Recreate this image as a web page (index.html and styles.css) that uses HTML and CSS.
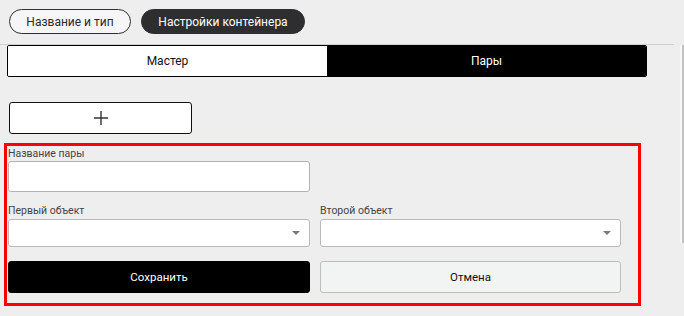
FILE: index.html
```html
<!DOCTYPE html>
<html lang="ru">
<head>
<meta charset="utf-8">
<title>Настройки контейнера</title>
<link rel="stylesheet" href="styles.css">
</head>
<body>
<div class="page">
  <div class="tabs">
    <button class="pill">Название и тип</button>
    <button class="pill pill-active">Настройки контейнера</button>
  </div>
  <div class="segmented">
    <div class="seg seg-light">Мастер</div>
    <div class="seg seg-dark">Пары</div>
  </div>
  <button class="add-btn" aria-label="Добавить">
    <svg width="16" height="16" viewBox="0 0 16 16"><path d="M8 1V15M1 8H15" stroke="#333" stroke-width="1.4" fill="none"/></svg>
  </button>
  <div class="pair-form">
    <label class="label">Название пары</label>
    <div class="input"></div>
    <div class="row row-selects">
      <div class="col">
        <label class="label">Первый объект</label>
        <div class="select"><span class="caret"></span></div>
      </div>
      <div class="col">
        <label class="label">Второй объект</label>
        <div class="select"><span class="caret"></span></div>
      </div>
    </div>
    <div class="row row-buttons">
      <button class="btn btn-save">Сохранить</button>
      <button class="btn btn-cancel">Отмена</button>
    </div>
  </div>
  <div class="scrollbar"></div>
</div>
</body>
</html>
```
FILE: styles.css
```css
* { box-sizing: border-box; }
html, body { margin: 0; padding: 0; }
body {
  background: #eeeeee;
  font-family: Roboto, "Liberation Sans", sans-serif;
  color: #222;
  width: 684px;
  height: 316px;
  overflow: hidden;
}
.page { position: relative; height: 316px; }
.tabs {
  display: flex;
  gap: 10px;
  padding: 9px 0 0 9px;
  height: 45px;
  width: 674px;
  border-bottom: 1px solid #cfcfcf;
}
.pill {
  height: 25px;
  border-radius: 13px;
  font-family: Roboto, "Liberation Sans", sans-serif;
  font-size: 12px;
  padding: 0;
  display: flex;
  align-items: center;
  justify-content: center;
  cursor: pointer;
}
.pill:first-child {
  width: 122px;
  background: #f6f6f8;
  border: 1px solid #2f2f31;
  color: #2a2a2a;
}
.pill-active {
  width: 164px;
  background: #2e2e31;
  border: 1px solid #2e2e31;
  color: #fff;
}
.segmented {
  display: flex;
  margin-left: 7px;
  width: 640px;
  height: 32px;
  border: 1px solid #000;
  border-radius: 2px;
  overflow: hidden;
}
.seg {
  flex: 1;
  display: flex;
  align-items: center;
  justify-content: center;
  font-size: 12px;
}
.seg-light { background: #fff; color: #111; flex: 0 0 319px; }
.seg-dark { background: #000; color: #fff; }
.add-btn {
  display: flex;
  align-items: center;
  justify-content: center;
  margin: 25px 0 0 9px;
  width: 183px;
  height: 32px;
  background: #fff;
  border: 1px solid #111;
  border-radius: 3px;
  padding: 0;
}
.pair-form {
  margin: 9px 0 0 4px;
  width: 637px;
  height: 163px;
  border: 3px solid #ff0000;
  padding: 0 0 0 1px;
}
.label {
  display: block;
  font-size: 10.5px;
  line-height: 15px;
  color: #444;
  height: 15px;
}
.input {
  width: 302px;
  height: 31px;
  background: #fff;
  border: 1px solid #b3b3b3;
  border-radius: 3px;
}
.row { display: flex; gap: 10px; }
.row-selects { margin-top: 12px; }
.col { width: 302px; }
.col + .col { width: 301px; }
.row-selects .label { line-height: 14px; height: 15px; }
.select {
  position: relative;
  height: 28px;
  background: #fff;
  border: 1px solid #b9b9b9;
  border-radius: 3px;
}
.caret {
  position: absolute;
  right: 9px;
  top: 11px;
  width: 0;
  height: 0;
  border-left: 4px solid transparent;
  border-right: 4px solid transparent;
  border-top: 4px solid #7a7a7a;
}
.row-buttons { margin-top: 14px; }
.btn {
  height: 32px;
  width: 302px;
  border-radius: 3px;
  font-family: Roboto, "Liberation Sans", sans-serif;
  font-size: 11.5px;
  padding: 0;
}
.btn-save { background: #000; color: #fff; border: 1px solid #000; }
.btn-cancel { width: 301px; background: #f2f3f3; color: #111; border: 1px solid #bdbdbd; }
.scrollbar {
  position: absolute;
  left: 680px;
  top: 45px;
  width: 4px;
  height: 198px;
  background: #c2c2c2;
  border-left: 2px solid #f7f7f7;
}
```
